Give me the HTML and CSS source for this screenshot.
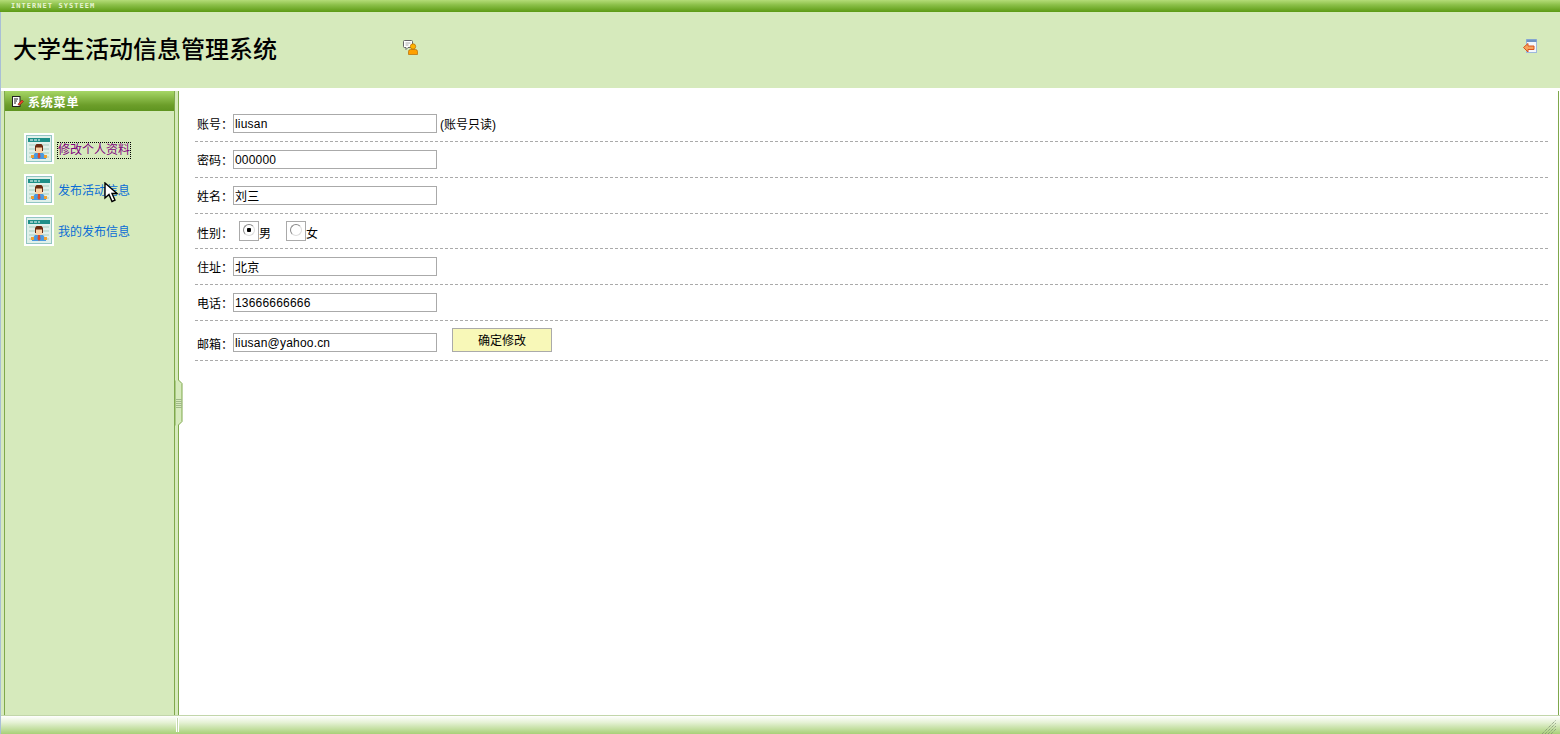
FILE: index.html
```html
<!DOCTYPE html>
<html lang="zh">
<head>
    <meta charset="utf-8">
    <title>大学生活动信息管理系统</title>
    <link rel="stylesheet" href="styles.css">
</head>
<body>
<div class="page">
    <div class="topbar"><span class="topbar-text">INTERNET SYSTEEM</span></div>

    <div class="header">
        <h1 class="title">大学生活动信息管理系统</h1>
        <svg class="icon-user" width="15" height="15" viewBox="0 0 15 15">
            <path d="M1.500 .5h7a1 1 0 0 1 1 1v5a1 1 0 0 1-1 1H5l-2 2v-2H1.500a1 1 0 0 1-1-1v-5a1 1 0 0 1 1-1z" fill="#fff" stroke="#666"/>
            <path d="M2.500 3h5M2.500 5h3" stroke="#aaa"/>
            <circle cx="10" cy="6.500" r="2.700" fill="#ffb400" stroke="#b86a00" stroke-width=".7"/>
            <path d="M5.500 14.500v-3a2 2 0 0 1 2-2h5a2 2 0 0 1 2 2v3z" fill="#ffa000" stroke="#b86a00" stroke-width=".7"/>
        </svg>
        <svg class="icon-exit" width="15" height="15" viewBox="0 0 15 15">
            <rect x="3.500" y=".5" width="10" height="13" fill="#f4f7fc" stroke="#9db8dc"/>
            <rect x="3.500" y=".5" width="10" height="2.500" fill="#6f93c4"/>
            <path d="M.5 8.500L5 4.500v2.500h6v3.500H5v2.500z" fill="#f7a35c" stroke="#d9541e"/>
        </svg>
    </div>

    <div class="main">
        <div class="side-wrap">
            <div class="sidebar">
                <div class="side-title">
                    <svg width="12" height="11" viewBox="0 0 12 11">
                        <rect x=".5" y=".5" width="7.500" height="10" fill="#fff" stroke="#222"/>
                        <path d="M2 3h4M2 5h3M2 7h2" stroke="#222"/>
                        <path d="M6 9l.5-1.500L10 4l1.500 1.500L8 9z" fill="#e0452c" stroke="#7a1d10" stroke-width=".5"/>
                    </svg>
                    <span>系统菜单</span>
                </div>
                <ul class="menu">
                    <li class="menu-item">
                        <svg class="menu-icon" width="30" height="31" viewBox="0 0 30 31"><use href="#person"/></svg>
                        <a class="menu-link visited" href="#">修改个人资料</a>
                    </li>
                    <li class="menu-item">
                        <svg class="menu-icon" width="30" height="31" viewBox="0 0 30 31"><use href="#person"/></svg>
                        <a class="menu-link" href="#">发布活动信息</a>
                    </li>
                    <li class="menu-item">
                        <svg class="menu-icon" width="30" height="31" viewBox="0 0 30 31"><use href="#person"/></svg>
                        <a class="menu-link" href="#">我的发布信息</a>
                    </li>
                </ul>
            </div>
        </div>

        <div class="content">
            <form class="form">
                <div class="row">
                    <label class="row-label">账号：</label>
                    <input class="text-input" type="text" value="liusan" readonly>
                    <span class="hint">(账号只读)</span>
                </div>
                <div class="row">
                    <label class="row-label">密码：</label>
                    <input class="text-input" type="text" value="000000">
                </div>
                <div class="row">
                    <label class="row-label">姓名：</label>
                    <input class="text-input" type="text" value="刘三">
                </div>
                <div class="row row-short">
                    <label class="row-label">性别：</label>
                    <span class="radio-box first"><input class="radio" type="radio" name="sex" checked></span>
                    <span class="radio-text">男</span>
                    <span class="radio-box"><input class="radio" type="radio" name="sex"></span>
                    <span class="radio-text">女</span>
                </div>
                <div class="row">
                    <label class="row-label">住址：</label>
                    <input class="text-input" type="text" value="北京">
                </div>
                <div class="row">
                    <label class="row-label">电话：</label>
                    <input class="text-input" type="text" value="13666666666">
                </div>
                <div class="row row-last">
                    <label class="row-label">邮箱：</label>
                    <input class="text-input" type="text" value="liusan@yahoo.cn">
                    <button class="submit" type="button">确定修改</button>
                </div>
            </form>
        </div>

        <div class="splitter">
            <svg width="8" height="46" viewBox="0 0 8 46">
                <path d="M0 0h3.500l3.500 3.500v38L3.500 45v1H0z" fill="#d6eabc"/>
                <path d="M3.500 0l3.500 3.500v38L3.500 45v1" fill="none" stroke="#7fa84c"/>
                <path d="M0 .5v45" stroke="#7fa84c"/>
                <path d="M1 19.500h6M1 21.500h6M1 23.500h6M1 25.500h6M1 27.500h6" stroke="#a0b888"/>
            </svg>
        </div>
    </div>

    <div class="footer">
        <span class="footer-sep"></span>
        <svg class="grip" width="14" height="14" viewBox="0 0 14 14">
            <path d="M0 14L14 0M3 14L14 3M6 14l8-8M9 14l5-5" stroke="#7a8a70" stroke-dasharray="1 1"/>
        </svg>
    </div>

    <svg class="cursor" width="15" height="22" viewBox="0 0 15 22">
        <path d="M1 1v15l4-3.500 3 7 3-1.300-3-6.700h5z" fill="#fff" stroke="#000" stroke-width="1.400"/>
    </svg>
</div>

<svg class="defs" width="0" height="0">
    <symbol id="person" viewBox="0 0 30 31">
        <rect width="30" height="31" fill="#fff"/>
        <rect x="2.500" y="2.500" width="25" height="26" fill="#e0f0ea" stroke="#93c6c2"/>
        <rect x="4" y="5" width="22" height="4" fill="#1f8f88"/>
        <path d="M6 7h3M10 7h3M14 7h2" stroke="#fff"/>
        <path d="M5 12h20M5 16h20M5 20h20M5 24h20" stroke="#a8cfc0"/>
        <path d="M8 26v-2l3-4h8l3 4v2z" fill="#4a9ae0"/>
        <path d="M7 22h3v3H7zM20 22h3v3h-3z" fill="#f0a030"/>
        <path d="M14 20h2l.5 4-1.500 2-1.500-2z" fill="#d94a2a"/>
        <rect x="11.500" y="13" width="7" height="7" fill="#fbd4a8"/>
        <path d="M11 18v-5l1.500-2h5l1.500 2v5h-1v-3.500h-6V18z" fill="#6b2a10"/>
    </symbol>
</svg>
</body>
</html>
```
FILE: styles.css
```css
*{
    margin: 0;
    padding: 0;
    box-sizing: border-box;
}
html,body{
    height: 100%;
    overflow: hidden;
}
body{
    background-color: #fff;
    font-family: "Liberation Sans", "Noto Sans CJK SC", sans-serif;
    font-size: 12px;
    color: #000;
}
.page{
    position: relative;
    height: 734px;
    display: flex;
    flex-direction: column;
    border-left: 1px solid #a9bfd6;
}
.defs{
    position: absolute;
}

/* top strip */
.topbar{
    height: 12px;
    margin-left: -1px;
    padding-left: 11px;
    background: linear-gradient(#b4dc78, #8cc04a 40%, #5c9a14);
}
.topbar-text{
    display: block;
    font-family: "DejaVu Sans Mono", monospace;
    font-size: 7px;
    font-weight: bold;
    line-height: 13px;
    letter-spacing: 1.050px;
    color: #e8f4d4;
}
.header{
    height: 76px;
    display: flex;
    align-items: center;
    padding-left: 12px;
    padding-right: 22px;
    background-color: #d6eabc;
}
.title{
    width: 390px;
    font-family: "Noto Sans CJK SC", sans-serif;
    font-size: 24px;
    font-weight: 500;
    margin-top: -6px;
}
.icon-user{
    margin-top: -5px;
}
.icon-exit{
    margin-left: auto;
    margin-top: -7px;
}

/* left menu */
.main{
    position: relative;
    flex: 1;
    display: flex;
    padding-top: 3px;
    padding-right: 1px;
}
.side-wrap{
    width: 178px;
    padding-left: 3px;
    padding-right: 3px;
    background-color: #d6eabc;
    border-right: 1px solid #7fa84c;
}
.sidebar{
    height: 100%;
    border-left: 1px solid #7fa84c;
    border-right: 1px solid #7fa84c;
}
.side-title{
    height: 20px;
    display: flex;
    align-items: center;
    gap: 4px;
    padding-left: 7px;
    background: linear-gradient(#a6d666, #6c9e2a 70%, #5f9420);
    color: #fff;
    font-weight: bold;
    letter-spacing: .8px;
}
.menu{
    list-style: none;
    padding-top: 22px;
    padding-left: 19px;
}
.menu-item{
    height: 41px;
    display: flex;
    align-items: flex-start;
    gap: 4px;
}
.menu-link{
    margin-top: 10px;
    line-height: 15px;
    color: #0a6cd6;
    text-decoration: none;
}
.visited{
    color: #800080;
    outline: 1px dotted #000;
}

/* form */
.content{
    flex: 1;
    padding-left: 16px;
    padding-right: 10px;
    padding-top: 15px;
    border-right: 1px solid #7fa84c;
}
.row{
    height: 36px;
    display: flex;
    align-items: flex-start;
    padding-top: 8px;
    padding-left: 2px;
    border-bottom: 1px dashed #aaa;
}
.row-short{
    height: 35px;
}
.row-last{
    height: 40px;
    padding-top: 7px;
}
.row-label{
    width: 36px;
    line-height: 19px;
    margin-top: 2px;
}
.row-short .row-label{
    margin-top: 3px;
}
.row-last .row-label{
    margin-top: 8px;
}
.text-input{
    width: 204px;
    height: 19px;
    padding-left: 1px;
    border: 1px solid #aaa;
    background-color: #fff;
    font-family: "Liberation Sans", "Noto Sans CJK SC", sans-serif;
    font-size: 12px;
    letter-spacing: .2px;
    outline: none;
}
.row-last .text-input{
    margin-top: 5px;
}
.hint{
    margin-left: 3px;
    margin-top: 2px;
    line-height: 19px;
}
.radio-box{
    width: 20px;
    height: 20px;
    margin-top: -1px;
    display: flex;
    justify-content: center;
    padding-top: 2px;
    border: 1px solid #aaa;
}
.radio-box.first{
    margin-left: 6px;
}
.radio{
    appearance: none;
    width: 12px;
    height: 12px;
    border: 1px solid;
    border-color: #888 #ddd #ddd #888;
    border-radius: 50%;
    background-color: #fff;
}
.radio:checked{
    background: radial-gradient(circle, #000 2px, #fff 2.500px);
}
.radio-text{
    width: 27px;
    line-height: 19px;
    margin-top: 3px;
}
.radio-text:last-child{
    width: auto;
}
.submit{
    width: 100px;
    height: 24px;
    margin-left: 15px;
    border: 1px solid #aaa;
    background-color: #f8f8b8;
    font-family: "Liberation Sans", "Noto Sans CJK SC", sans-serif;
    font-size: 12px;
    padding-bottom: 2px;
}

/* things lying over the layout */
.splitter{
    position: absolute;
    left: 174px;
    top: 292px;
    line-height: 0;
}
.cursor{
    position: absolute;
    left: 103px;
    top: 182px;
}

.footer{
    position: relative;
    height: 19px;
    border-top: 1px solid #c2d6aa;
    background: linear-gradient(#fff, #e6f2d6 35%, #a8d078);
}
.footer-sep{
    position: absolute;
    left: 175px;
    top: 2px;
    width: 3px;
    height: 14px;
    border-left: 1px solid #fff;
    border-right: 1px solid #fff;
    background-color: #c2d6aa;
}
.grip{
    position: absolute;
    right: 4px;
    bottom: 0;
}
```
